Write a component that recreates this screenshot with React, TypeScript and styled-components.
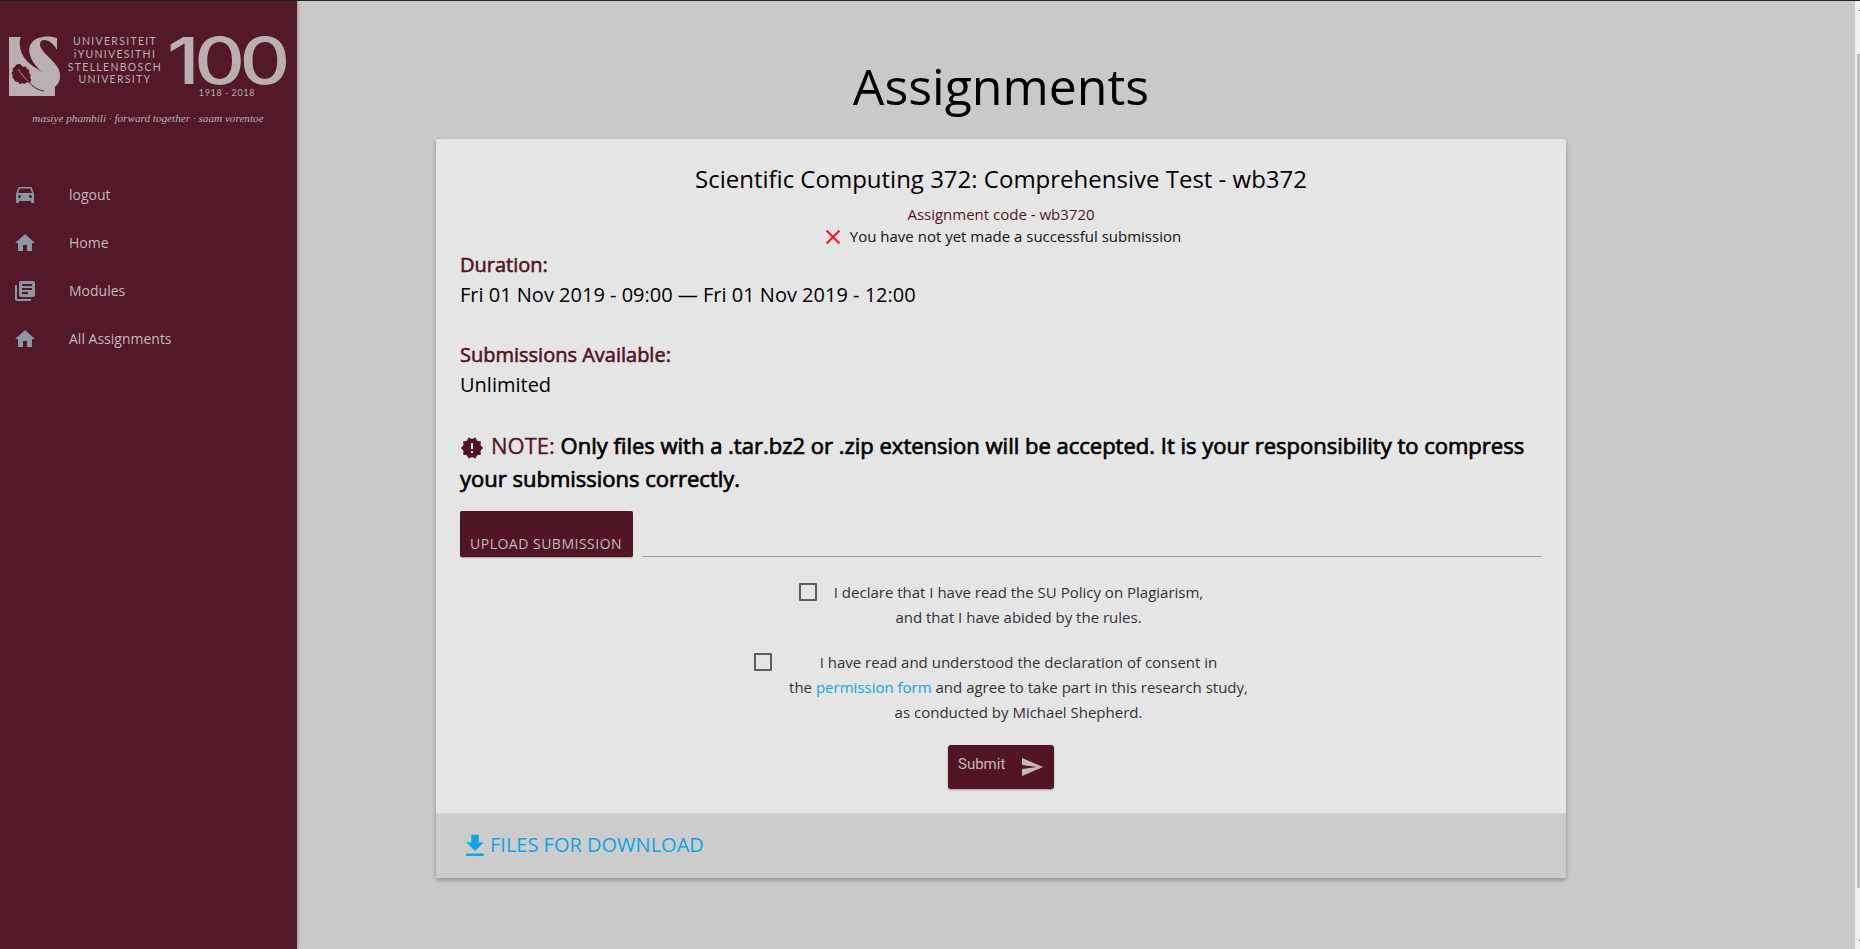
import React from "react";
import styled, { createGlobalStyle } from "styled-components";

const MAROON = "#521527";
const SIDEBAR = "#531829";
const SOFT = "#c3b9bd";
const LOGO = "#b9afb3";
const BLUE = "#0ea5e9";

const Global = createGlobalStyle`
  html, body { margin: 0; padding: 0; height: 100%; overflow: hidden; }
  body { font-family: "Open Sans", "Liberation Sans", sans-serif; background: #c9c9c9; }
  #root { height: 100%; }
`;

const Page = styled.div`
  height: 949px;
  display: flex;
  flex-direction: column;
`;
const TopLine = styled.div`
  height: 1px;
  background: #222;
  flex: none;
`;
const Body = styled.div`
  flex: 1;
  display: flex;
  min-height: 0;
`;
const Sidebar = styled.aside`
  width: 297px;
  flex: none;
  background: ${SIDEBAR};
  box-shadow: 1px 0 3px rgba(0, 0, 0, 0.25);
  display: flex;
  flex-direction: column;
  z-index: 1;
`;
const LogoBox = styled.div`
  height: 130px;
  flex: none;
`;
const Nav = styled.nav`
  padding-top: 39px;
  display: flex;
  flex-direction: column;
`;
const NavItem = styled.a`
  height: 48px;
  display: flex;
  align-items: center;
  padding-left: 13px;
  color: ${SOFT};
  font-size: 14px;
  svg { width: 24px; height: 24px; fill: #8a979e; margin: 2px 32px 0 0; flex: none; }
`;
const Main = styled.main`
  flex: 1;
  min-width: 0;
  padding-right: 150px;
  display: flex;
  flex-direction: column;
  align-items: center;
`;
const Title = styled.h1`
  margin: 48px 0 0;
  font-size: 50px;
  line-height: 74px;
  font-weight: 400;
  color: #000;
`;
const Card = styled.section`
  margin-top: 16px;
  width: 1130px;
  flex: none;
  background: #e5e5e5;
  border-radius: 2px;
  box-shadow: 0 2px 4px rgba(0, 0, 0, 0.3);
  overflow: hidden;
`;
const CardBody = styled.div`
  padding: 24px;
  height: 674px;
  box-sizing: border-box;
`;
const CardTitle = styled.h2`
  margin: 0;
  text-align: center;
  font-size: 24px;
  line-height: 32px;
  font-weight: 400;
  color: #000;
`;
const Code = styled.div`
  margin-top: 9px;
  text-align: center;
  font-size: 15px;
  line-height: 21px;
  color: ${MAROON};
`;
const Status = styled.div`
  margin-top: 1px;
  font-size: 15px;
  line-height: 21px;
  color: #111;
  display: flex;
  justify-content: center;
  align-items: center;
  gap: 9px;
  padding-left: 4px;
  svg { width: 16px; height: 16px; }
`;
const Label = styled.div<{ $top?: number }>`
  margin-top: ${(p) => p.$top ?? 0}px;
  font-size: 20px;
  line-height: 27px;
  font-weight: 400;
  color: ${MAROON};
  -webkit-text-stroke: 0.6px ${MAROON};
`;
const Value = styled.div`
  font-size: 20px;
  line-height: 30px;
  margin-top: 2px;
  color: #000;
`;
const Note = styled.div`
  margin-top: 29px;
  font-size: 22px;
  line-height: 33px;
  font-weight: 400;
  color: #000;
  -webkit-text-stroke: 0.7px #000;
  svg { width: 24px; height: 24px; fill: ${MAROON}; vertical-align: -6px; margin-right: 7px; }
`;
const NoteLabel = styled.span`
  color: ${MAROON};
  -webkit-text-stroke: 0.3px ${MAROON};
`;
const UploadRow = styled.div`
  margin-top: 16px;
  display: flex;
  align-items: flex-end;
  gap: 9px;
`;
const UploadButton = styled.button`
  width: 173px;
  height: 46px;
  padding: 20px 10px 0;
  border: 0;
  border-radius: 2px;
  background: ${MAROON};
  color: ${SOFT};
  font: 14px/20px "Open Sans", sans-serif;
  letter-spacing: 0.5px;
  text-align: left;
  white-space: nowrap;
  box-shadow: 0 1px 1px rgba(0, 0, 0, 0.3);
`;
const UploadLine = styled.div`
  flex: 1;
  height: 1px;
  background: #a0a0a0;
`;
const Declaration = styled.div<{ $top: number }>`
  margin-top: ${(p) => p.$top}px;
  padding-left: 35px;
  text-align: center;
  font-size: 15px;
  line-height: 25px;
  color: #333;
`;
const Check = styled.span<{ $offset: number }>`
  position: absolute;
  width: 14px;
  height: 14px;
  margin: 3px 0 0 -${(p) => p.$offset}px;
  border: 2px solid #5c5c5c;
  border-radius: 1px;
`;
const Link = styled.a`
  color: ${BLUE};
`;
const SubmitRow = styled.div`
  margin-top: 20px;
  display: flex;
  justify-content: center;
`;
const SubmitButton = styled.button`
  width: 106px;
  height: 44px;
  padding: 0 10px;
  border: 0;
  border-radius: 3px;
  background: ${MAROON};
  color: ${SOFT};
  font: 15px Roboto, sans-serif;
  display: flex;
  align-items: center;
  justify-content: space-between;
  box-shadow: 0 1px 2px rgba(0, 0, 0, 0.35);
  svg { width: 24px; height: 24px; fill: ${SOFT}; }
`;
const SubmitText = styled.span`
  margin-top: -6px;
`;
const CardFooter = styled.a`
  height: 65px;
  background: #ccc;
  border-top: 1px solid #d4d4d4;
  box-sizing: border-box;
  padding: 0 0 4px 24px;
  display: flex;
  align-items: center;
  color: ${BLUE};
  font-size: 20px;
  svg { width: 30px; height: 30px; fill: ${BLUE}; margin: 4px 0 0 0; }
`;
const Scrollbar = styled.div`
  position: relative;
  width: 5px;
  flex: none;
  background: #f1f1f1;
  display: flex;
  justify-content: flex-end;
  padding-top: 53px;
  padding-bottom: 61px;
  &::before, &::after {
    content: "";
    position: absolute;
    right: 0;
    width: 1px;
    height: 1px;
    background: #444;
  }
  &::before { top: 9px; }
  &::after { bottom: 8px; }
`;
const Thumb = styled.div`
  width: 3px;
  background: #c1c1c1;
`;

const Logo = () => (
  <svg width="297" height="130" viewBox="0 0 297 130" fill={LOGO}>
    <rect x="9" y="36" width="46" height="59" />
    <path fill={SIDEBAR} d="M21 35H62V88H55C55 74 41 72 29 62C20 54 18 43 21 35Z" />
    <path d="M57 37V49C54 43 49 39 44 39C40 39 39 43 41 47C45 54 55 60 59 69C62 77 59 85 51 88C47 90 43 90 41 88C45 87 48 83 47 78C45 71 33 66 30 54C27 44 33 37 43 36C48 35 53 36 57 37Z" />
    <path fill={SIDEBAR} d="M19 63c2 0 3 2 4 3c2-1 4 0 4 2c2 0 3 2 2 4c2 1 2 3 1 5c2 1 1 3 0 5l-3-1c-1 2-3 2-5 1c-1 2-3 1-4-1c-2 0-4-1-4-3c-2-1-2-3-1-4c-2-1-2-3 0-4c-1-2 0-4 2-4c0-2 2-3 4-3z" />
    <path fill="none" stroke={LOGO} strokeWidth="0.8" d="M18 68C21 72 24 77 28 80" />
    <path fill="none" stroke={SIDEBAR} strokeWidth="1" d="M28 80C32 85 37 89 44 90" />
    <g fontFamily="Lato, sans-serif" fontSize="10.5" letterSpacing="1.3" textAnchor="middle">
      <text x="115" y="44">UNIVERSITEIT</text>
      <text x="115" y="57">iYUNIVESITHI</text>
      <text x="115" y="70">STELLENBOSCH</text>
      <text x="115" y="82">UNIVERSITY</text>
    </g>
    <text fontFamily="Inter, sans-serif" fontWeight="500" fontSize="64" letterSpacing="-4.5" transform="translate(167 82.5) scale(1.23 1)">100</text>
    <text x="227" y="95" fontFamily="Lato, sans-serif" fontSize="9" letterSpacing="0.7" textAnchor="middle">1918 · 2018</text>
    <text x="148" y="121" fontFamily="'Liberation Serif', serif" fontStyle="italic" fontSize="11.2" textAnchor="middle">masiye phambili · forward together · saam vorentoe</text>
  </svg>
);

const Home = () => (
  <svg viewBox="0 0 24 24"><path d="M10 20v-6h4v6h5v-8h3L12 3 2 12h3v8z" /></svg>
);
const Car = () => (
  <svg viewBox="0 1 24 24"><path d="M18.92 6.01C18.72 5.42 18.16 5 17.5 5h-11c-.66 0-1.21.42-1.42 1.01L3 12v8c0 .55.45 1 1 1h1c.55 0 1-.45 1-1v-1h12v1c0 .55.45 1 1 1h1c.55 0 1-.45 1-1v-8l-2.08-5.99zM6.5 16c-.83 0-1.5-.67-1.5-1.5S5.67 13 6.5 13s1.5.67 1.5 1.5S7.33 16 6.5 16zm11 0c-.83 0-1.5-.67-1.5-1.5s.67-1.5 1.5-1.5 1.5.67 1.5 1.5-.67 1.5-1.5 1.5zM5 11l1.5-4.5h11L19 11H5z" /></svg>
);
const Library = () => (
  <svg viewBox="0 0 24 24"><path d="M4 6H2v14c0 1.1.9 2 2 2h14v-2H4V6zm16-4H8c-1.1 0-2 .9-2 2v12c0 1.1.9 2 2 2h12c1.1 0 2-.9 2-2V4c0-1.1-.9-2-2-2zm-1 9H9V9h10v2zm-4 4H9v-2h6v2zm4-8H9V5h10v2z" /></svg>
);

export default function App() {
  return (
    <Page>
      <Global />
      <TopLine />
      <Body>
        <Sidebar>
          <LogoBox><Logo /></LogoBox>
          <Nav>
            <NavItem><Car />logout</NavItem>
            <NavItem><Home />Home</NavItem>
            <NavItem><Library />Modules</NavItem>
            <NavItem><Home />All Assignments</NavItem>
          </Nav>
        </Sidebar>
        <Main>
          <Title>Assignments</Title>
          <Card>
            <CardBody>
              <CardTitle>Scientific Computing 372: Comprehensive Test - wb372</CardTitle>
              <Code>Assignment code - wb3720</Code>
              <Status>
                <svg viewBox="0 0 16 16"><path d="M1.5 1.5l13 13M14.5 1.5l-13 13" stroke="#fa0f30" strokeWidth="2" fill="none" /></svg>
                You have not yet made a successful submission
              </Status>
              <Label $top={4}>Duration:</Label>
              <Value>Fri 01 Nov 2019 - 09:00 — Fri 01 Nov 2019 - 12:00</Value>
              <Label $top={31}>Submissions Available:</Label>
              <Value>Unlimited</Value>
              <Note>
                <svg viewBox="0 0 24 24"><path d="M23 12l-2.44-2.78.34-3.68-3.61-.82-1.89-3.18L12 3 8.6 1.54 6.71 4.72l-3.61.81.34 3.68L1 12l2.44 2.78-.34 3.69 3.61.82 1.89 3.18L12 21l3.4 1.46 1.89-3.18 3.61-.82-.34-3.68L23 12zm-10 5h-2v-2h2v2zm0-4h-2V7h2v6z" /></svg>
                <NoteLabel>NOTE:</NoteLabel> Only files with a .tar.bz2 or .zip extension will be accepted. It is your responsibility to compress your submissions correctly.
              </Note>
              <UploadRow>
                <UploadButton>UPLOAD SUBMISSION</UploadButton>
                <UploadLine />
              </UploadRow>
              <Declaration $top={23}>
                <Check $offset={35} />I declare that I have read the SU Policy on Plagiarism,<br />and that I have abided by the rules.
              </Declaration>
              <Declaration $top={20}>
                <Check $offset={66} />I have read and understood the declaration of consent in<br />
                the <Link>permission form</Link> and agree to take part in this research study,<br />
                as conducted by Michael Shepherd.
              </Declaration>
              <SubmitRow>
                <SubmitButton><SubmitText>Submit</SubmitText>
                  <svg viewBox="0 0 24 24"><path d="M2.01 21L23 12 2.01 3 2 10l15 2-15 2z" /></svg>
                </SubmitButton>
              </SubmitRow>
            </CardBody>
            <CardFooter>
              <svg viewBox="0 0 24 24"><path d="M19 9h-4V3H9v6H5l7 7 7-7zM5 18v2h14v-2H5z" /></svg>
              FILES FOR DOWNLOAD
            </CardFooter>
          </Card>
        </Main>
        <Scrollbar><Thumb /></Scrollbar>
      </Body>
    </Page>
  );
}
